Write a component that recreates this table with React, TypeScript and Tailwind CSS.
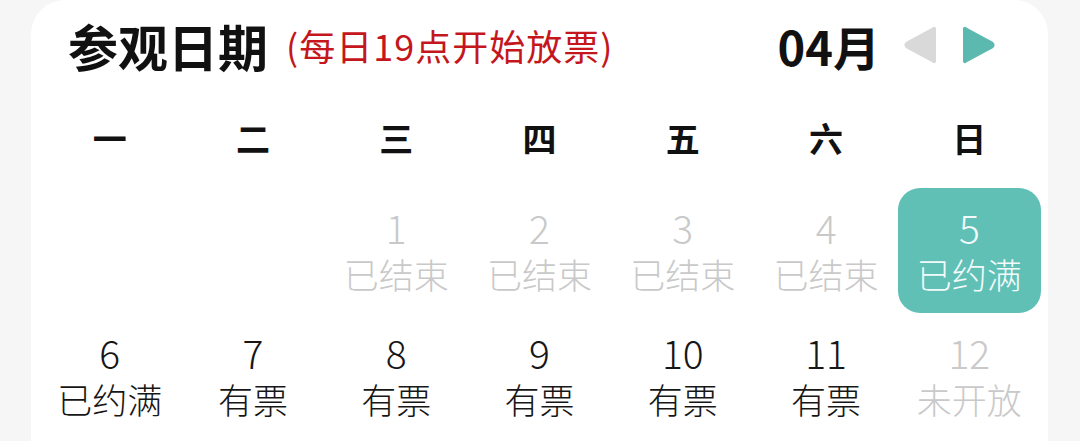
import React from "react";

type Cell = { n: number; s: string; kind: "past" | "full" | "ok" | "closed"; sel?: boolean } | null;

const rows: Cell[][] = [
  [
    null,
    null,
    { n: 1, s: "已结束", kind: "past" },
    { n: 2, s: "已结束", kind: "past" },
    { n: 3, s: "已结束", kind: "past" },
    { n: 4, s: "已结束", kind: "past" },
    { n: 5, s: "已约满", kind: "full", sel: true },
  ],
  [
    { n: 6, s: "已约满", kind: "full" },
    { n: 7, s: "有票", kind: "ok" },
    { n: 8, s: "有票", kind: "ok" },
    { n: 9, s: "有票", kind: "ok" },
    { n: 10, s: "有票", kind: "ok" },
    { n: 11, s: "有票", kind: "ok" },
    { n: 12, s: "未开放", kind: "closed" },
  ],
];

const weekdays = ["一", "二", "三", "四", "五", "六", "日"];

function DayCell({ c }: { c: Cell }) {
  if (!c) return <div className="h-[125px]" />;
  const color = c.sel
    ? "text-[#f2fbfa]"
    : c.kind === "past" || c.kind === "closed"
    ? "text-[#c9c9c9]"
    : "text-[#161616]";
  return (
    <div
      className={`h-[125px] flex flex-col items-center justify-center ${
        c.sel ? "bg-[#60c0b6] rounded-[22px]" : ""
      } ${color}`}
    >
      <div className="text-[39px] leading-[46px] font-light">{c.n}</div>
      <div className="text-[35px] leading-[48px] font-light">{c.s}</div>
    </div>
  );
}

export default function App() {
  return (
    <div
      className="w-[1080px] h-[441px] bg-[#f6f6f6] overflow-hidden pl-[31px] pr-[32px]"
      style={{ fontFamily: '"Noto Sans CJK SC", "Noto Sans", sans-serif' }}
    >
      <div className="bg-white rounded-t-[34px] h-full">
        <div className="h-[90px] flex items-center pl-[37px] pr-[53px]">
          <div className="text-[50px] font-bold text-[#111] leading-none">参观日期</div>
          <div className="ml-[18px] text-[36px] text-[#c4161c] leading-none tracking-[1px]">(每日19点开始放票)</div>
          <div className="flex-1" />
          <div className="text-[47px] font-bold text-[#111] leading-none">04月</div>
          <svg className="ml-[24px]" width="32" height="40" viewBox="0 0 32 40">
            <path
              d="M29 4 Q31 2 31 6 L31 34 Q31 38 29 36 L3 22 Q1 20 3 18 Z"
              fill="#d9d9d9"
              stroke="#d9d9d9"
              strokeWidth="3"
              strokeLinejoin="round"
            />
          </svg>
          <svg className="ml-[27px]" width="32" height="40" viewBox="0 0 32 40">
            <path
              d="M3 4 Q1 2 1 6 L1 34 Q1 38 3 36 L29 22 Q31 20 29 18 Z"
              fill="#5bb9af"
              stroke="#5bb9af"
              strokeWidth="3"
              strokeLinejoin="round"
            />
          </svg>
        </div>
        <div className="px-[7px]">
          <div className="grid grid-cols-7 h-[98px] items-center pb-[2px]">
            {weekdays.map((w) => (
              <div key={w} className="text-center text-[34px] font-bold text-[#111] leading-none">
                {w}
              </div>
            ))}
          </div>
          {rows.map((r, i) => (
            <div key={i} className="grid grid-cols-7">
              {r.map((c, j) => (
                <DayCell key={j} c={c} />
              ))}
            </div>
          ))}
        </div>
      </div>
    </div>
  );
}
